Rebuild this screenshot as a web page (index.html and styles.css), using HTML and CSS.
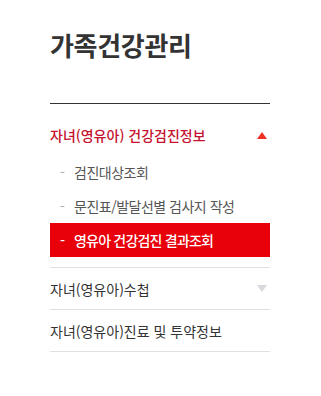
FILE: index.html
```html
<!DOCTYPE html>
<html lang="ko">
<head>
<meta charset="utf-8">
<link rel="stylesheet" href="styles.css">
</head>
<body>
<nav class="lnb">
  <h2 class="lnb-title">가족건강관리</h2>
  <ul class="menu">
    <li class="menu-item open">
      <a class="menu-link">자녀(영유아) 건강검진정보<span class="arrow up"></span></a>
      <ul class="sub">
        <li class="sub-item"><a>검진대상조회</a></li>
        <li class="sub-item"><a>문진표/발달선별 검사지 작성</a></li>
        <li class="sub-item active"><a>영유아 건강검진 결과조회</a></li>
      </ul>
    </li>
    <li class="menu-item">
      <a class="menu-link">자녀(영유아)수첩<span class="arrow down"></span></a>
    </li>
    <li class="menu-item">
      <a class="menu-link">자녀(영유아)진료 및 투약정보</a>
    </li>
  </ul>
</nav>
</body>
</html>
```
FILE: styles.css
```css
* { box-sizing: border-box; }
body {
  margin: 0;
  background: #fff;
  font-family: "Noto Sans CJK KR", "Noto Sans", sans-serif;
}
.lnb {
  width: 220px;
  margin-left: 50px;
  padding-top: 27px;
}
.lnb-title {
  margin: 0;
  font-size: 26px;
  line-height: 35px;
  font-weight: 700;
  color: #333;
  letter-spacing: -0.3px;
  padding-bottom: 41px;
  border-bottom: 1px solid #333;
}
.menu, .sub {
  list-style: none;
  margin: 0;
  padding: 0;
}
.menu-item {
  border-bottom: 1px solid #e0dfe6;
}
.menu-link {
  display: flex;
  align-items: center;
  justify-content: space-between;
  height: 41px;
  font-size: 14px;
  color: #333;
}
.menu-item.open {
  padding-bottom: 10px;
}
.menu-item.open .menu-link {
  height: auto;
  padding-top: 21px;
  padding-bottom: 10px;
  line-height: 20px;
  color: #c4122f;
  font-weight: 500;
}
.arrow {
  width: 0;
  height: 0;
  margin-right: 3px;
  border-left: 5px solid transparent;
  border-right: 5px solid transparent;
}
.arrow.up { border-bottom: 7px solid #ee3124; }
.arrow.down { border-top: 7px solid #d9d9dd; }
.sub-item a {
  display: flex;
  align-items: center;
  height: 34px;
  padding-left: 10px;
  font-size: 14px;
  color: #555;
  letter-spacing: -0.5px;
}
.sub-item a::before {
  content: "-";
  color: #aaa;
  width: 14px;
}
.sub-item.active a {
  background: #e8000b;
  color: #fff;
  font-weight: 500;
  letter-spacing: -0.8px;
}
.sub-item.active a::before {
  color: #fff;
}
```
